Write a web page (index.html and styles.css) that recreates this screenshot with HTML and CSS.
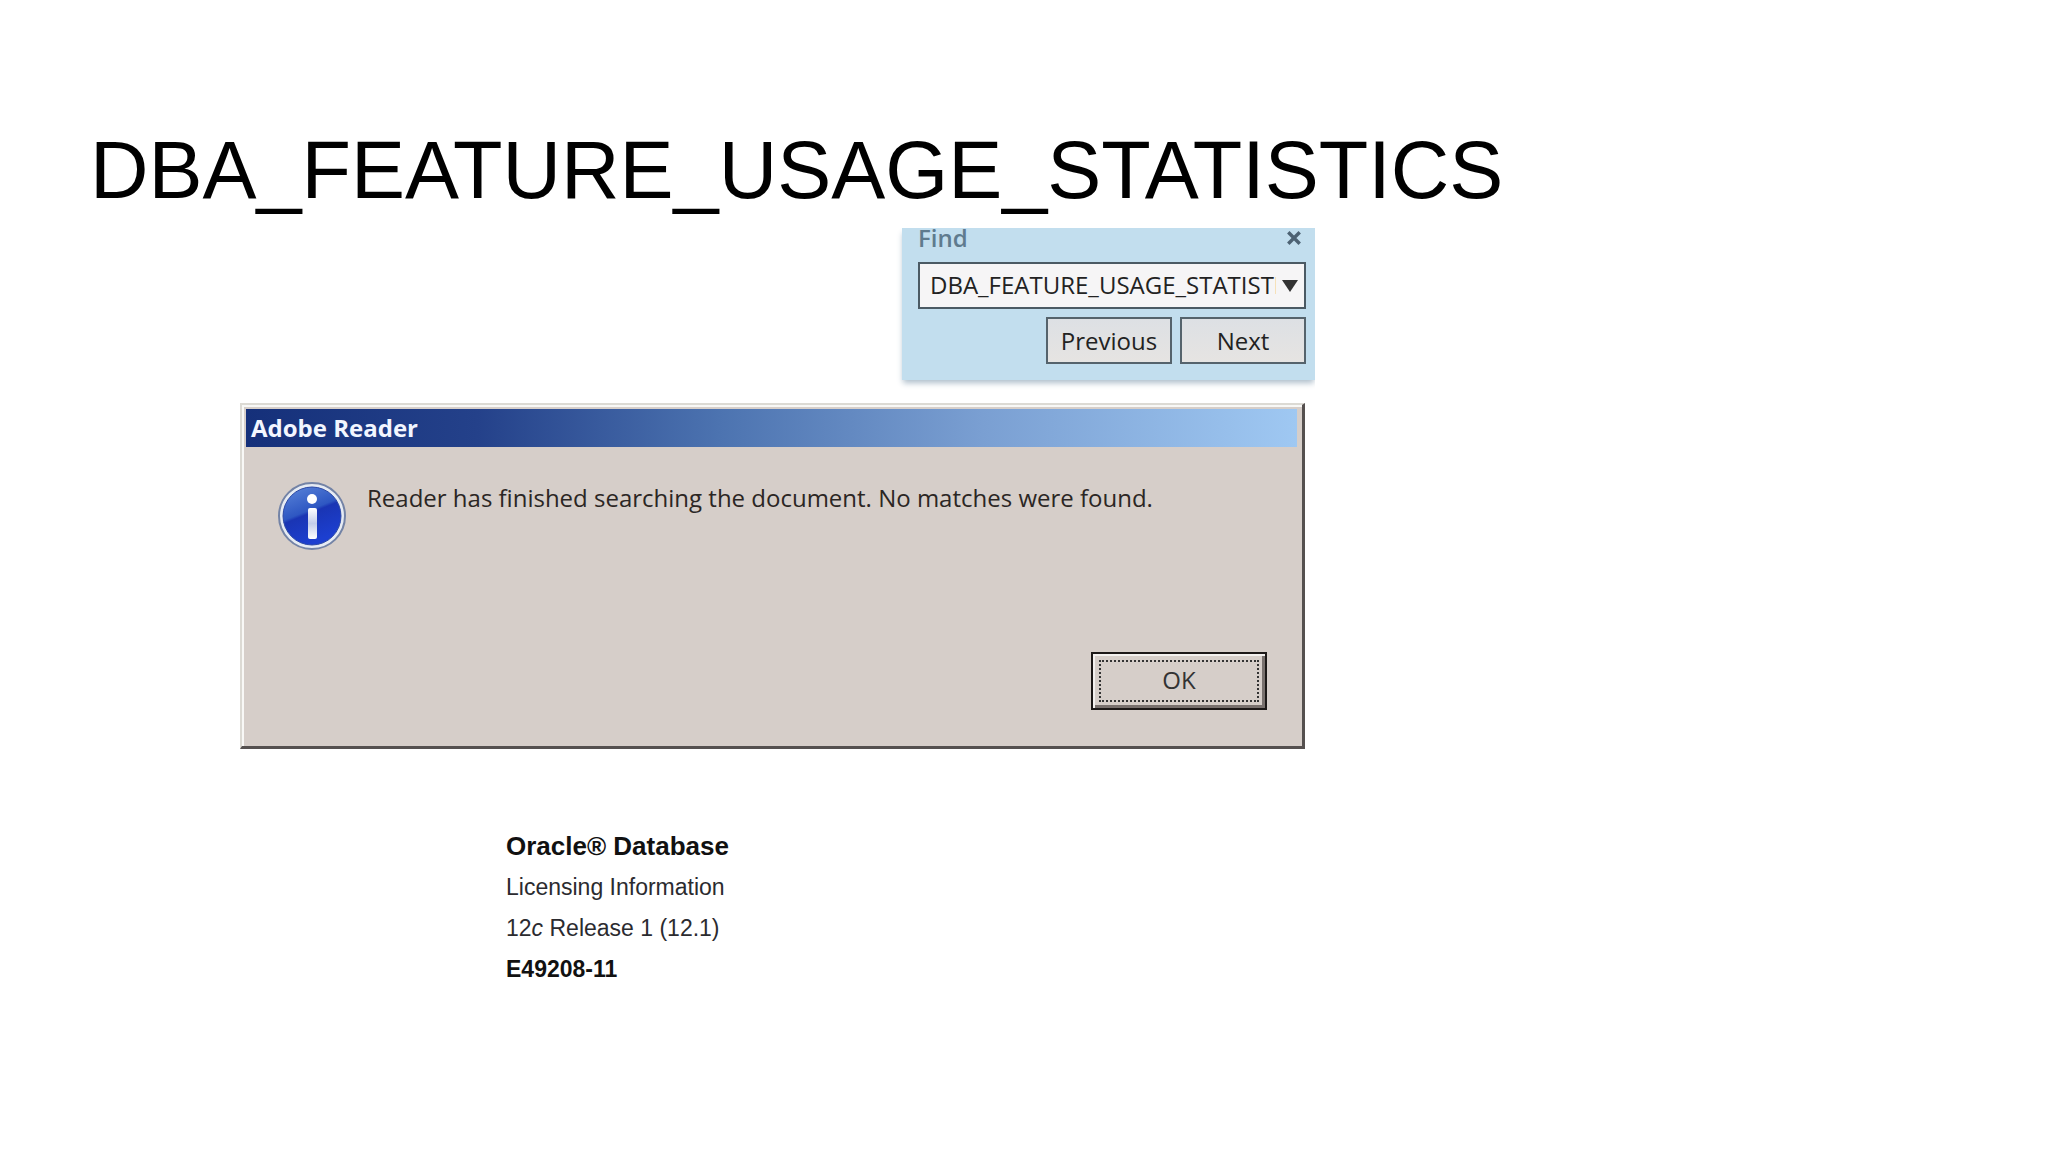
FILE: index.html
```
<!DOCTYPE html>
<html lang="en">
<head>
	<meta charset="UTF-8">
	<title>DBA_FEATURE_USAGE_STATISTICS</title>
	<link rel="stylesheet" href="styles.css">
</head>
<body>
	<div class="slide">
		<h1 class="title">DBA_FEATURE_USAGE_STATISTICS</h1>
		<div class="content">
			<form class="find">
				<div class="find-head">
					<label for="find-text">Find</label>
					<button type="button" class="close" aria-label="Close">
						<svg width="16" height="16" viewBox="0 0 14 14"><path d="M2 2L12 12M12 2L2 12" stroke="#4d6273" stroke-width="3"/></svg>
					</button>
				</div>
				<div class="find-box">
					<input type="text" id="find-text" value="DBA_FEATURE_USAGE_STATISTICS">
					<button type="button" class="drop" aria-label="Find options">
						<svg width="16" height="12" viewBox="0 0 16 12"><path d="M0 0H16L8 12Z" fill="#333"/></svg>
					</button>
				</div>
				<div class="find-btns">
					<button type="button">Previous</button>
					<button type="button">Next</button>
				</div>
			</form>
			<div class="dialog" role="dialog" aria-labelledby="dialog-title">
				<h2 class="dialog-title" id="dialog-title">Adobe Reader</h2>
				<div class="dialog-body">
					<svg class="info" width="70" height="70" viewBox="0 0 70 70">
						<defs>
							<linearGradient id="blue" x1="0" y1="0" x2="0.4" y2="1">
								<stop offset="0" stop-color="#5c86da"/>
								<stop offset="0.5" stop-color="#2e57c2"/>
								<stop offset="0.55" stop-color="#1a35b4"/>
								<stop offset="1" stop-color="#1c3fd0"/>
							</linearGradient>
							<linearGradient id="stem" x1="0" y1="0" x2="0" y2="1">
								<stop offset="0" stop-color="#fff"/>
								<stop offset="0.5" stop-color="#c3cdea"/>
								<stop offset="1" stop-color="#fff"/>
							</linearGradient>
						</defs>
						<circle cx="35" cy="35" r="33" fill="#e6ebf3" stroke="#7383a6" stroke-width="2"/>
						<circle cx="35" cy="35" r="29" fill="url(#blue)" stroke="#2c49a6"/>
						<circle cx="35" cy="18" r="5" fill="#fff"/>
						<rect x="31" y="27" width="9" height="31" rx="2" fill="url(#stem)"/>
					</svg>
					<p class="message">Reader has finished searching the document. No matches were found.</p>
				</div>
				<div class="dialog-foot">
					<button type="button" class="ok"><span>OK</span></button>
				</div>
			</div>
			<div class="book">
				<p class="book-name">Oracle® Database</p>
				<p>Licensing Information</p>
				<p>12<i>c</i> Release 1 (12.1)</p>
				<p class="book-part">E49208-11</p>
			</div>
		</div>
	</div>
</body>
</html>
```

FILE: styles.css
```
*{
	margin: 0;
	padding: 0;
	box-sizing: border-box;
}
body{
	background: #fff;
	color: #000;
	font-family: "Open Sans", sans-serif;
}
button, input{
	font: inherit;
	color: inherit;
	border: 0;
	background: none;
}
svg{
	display: block;
}
.slide{
	padding: 120px 90px 60px;
}
.title{
	font: 81px/100px "Liberation Sans", Arial, sans-serif;
}
.content{
	max-width: 1075px;
	margin: 8px 0 0 150px;
}
/* find panel */
.find{
	width: 413px;
	margin-left: auto;
	padding: 0 9px 16px 16px;
	background: #c2deee;
	box-shadow: 0 4px 6px -1px #aebecb;
	clip-path: inset(0 0 -12px -12px);
	font-size: 24px;
}
.find-head{
	display: flex;
	justify-content: space-between;
	height: 34px;
	line-height: 20px;
	color: #5f7b8e;
	font-weight: 600;
}
.close{
	width: 20px;
	height: 20px;
	padding: 2px 0;
}
.find-box{
	display: flex;
	height: 47px;
	padding-left: 10px;
	border: 2px solid #4b5a64;
	background: #f6f5f6;
}
.find-box input{
	flex: 1;
	min-width: 0;
	padding-bottom: 2px;
	outline: 0;
	color: #222;
}
.drop{
	width: 28px;
	padding-left: 6px;
}
.find-btns{
	display: flex;
	justify-content: flex-end;
	gap: 8px;
	margin-top: 8px;
}
.find-btns button{
	width: 126px;
	height: 47px;
	border: 2px solid #55636c;
	background: linear-gradient(#dde0e4, #e6e4e2);
	color: #222;
	line-height: 40px;
}
/* message box */
.dialog{
	margin: 23px 10px 0 0;
	padding: 4px 5px 36px 4px;
	border: 2px solid;
	border-color: #dcdad4 #55504f #55504f #dcdad4;
	border-right-width: 3px;
	border-bottom-width: 3px;
	box-shadow: inset 2px 2px #f8f8f6;
	background: #d6cec9;
}
.dialog-title{
	height: 38px;
	padding-left: 5px;
	background: linear-gradient(90deg, #15307a, #24418a 22%, #4c73b0 45%, #7a9fd2 70%, #9fc8f2);
	color: #f2f6ff;
	font-size: 24px;
	line-height: 38px;
}
.dialog-body{
	display: flex;
	gap: 20px;
	padding: 34px 20px 0 31px;
}
.message{
	color: #2b2624;
	font-size: 24px;
	line-height: 34px;
}
.dialog-foot{
	padding: 101px 30px 0 0;
	text-align: right;
}
.ok{
	width: 176px;
	height: 58px;
	padding: 4px;
	border: 2px solid #1c1817;
	box-shadow: inset 2px 2px #f3f0ee, inset -3px -3px #79716e;
	background: #d6cec9;
	color: #333;
	font-size: 24px;
	vertical-align: top;
}
.ok span{
	display: block;
	margin: 2px;
	border: 2px dotted #333;
	line-height: 36px;
	padding-bottom: 2px;
}
/* book cover lines */
.book{
	margin: 77px 0 0 266px;
	color: #2b2b2f;
	font: 23px/41px "Liberation Sans Narrow", "Liberation Sans", Arial, sans-serif;
}
.book-name{
	color: #111;
	font-size: 26px;
	font-weight: bold;
}
.book-part{
	color: #111;
	font-weight: bold;
}
```
